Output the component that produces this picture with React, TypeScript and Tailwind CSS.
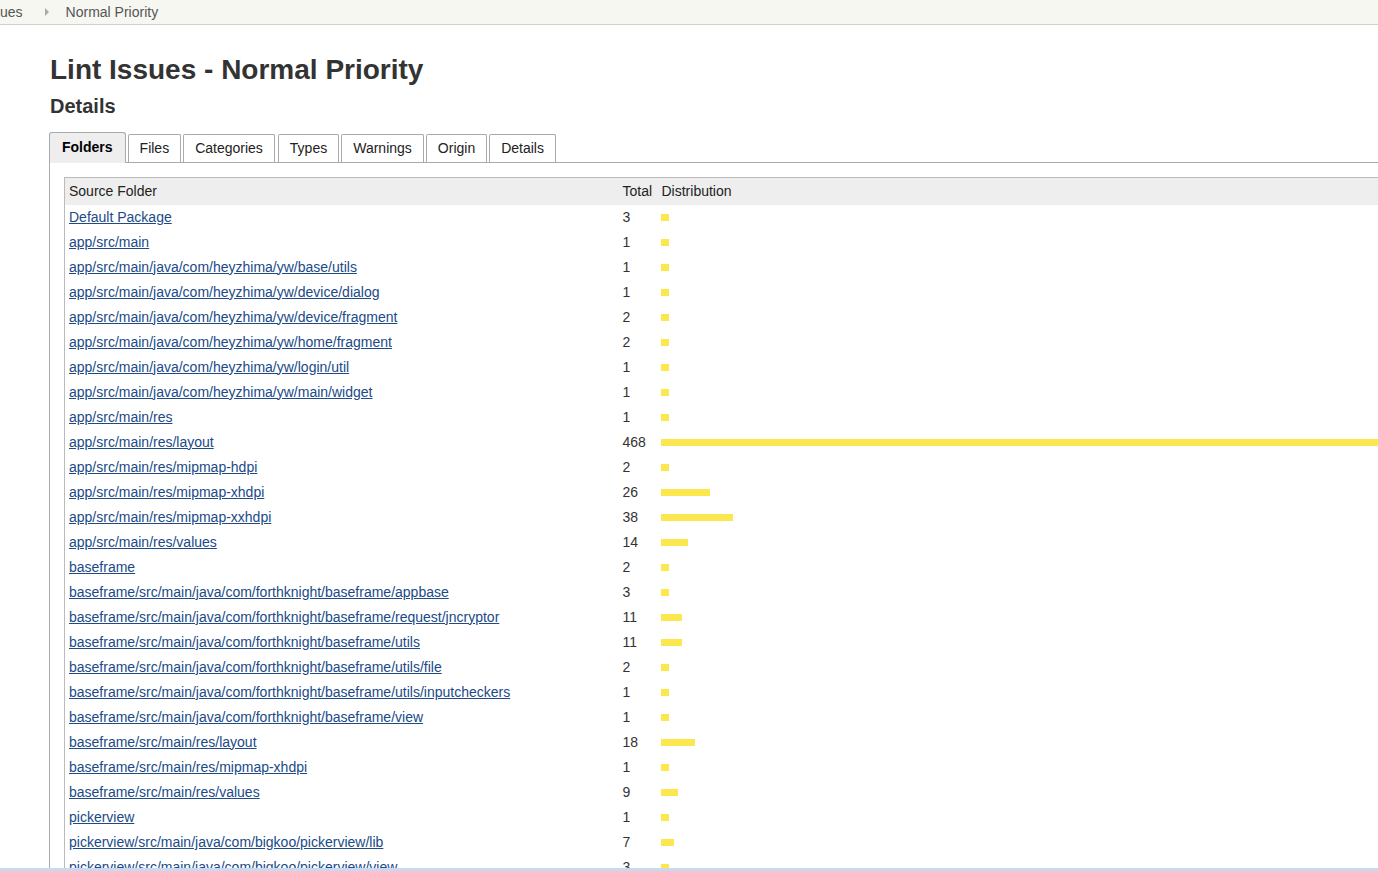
import React from 'react';

const rows: [string, number][] = [
  ['Default Package', 3],
  ['app/src/main', 1],
  ['app/src/main/java/com/heyzhima/yw/base/utils', 1],
  ['app/src/main/java/com/heyzhima/yw/device/dialog', 1],
  ['app/src/main/java/com/heyzhima/yw/device/fragment', 2],
  ['app/src/main/java/com/heyzhima/yw/home/fragment', 2],
  ['app/src/main/java/com/heyzhima/yw/login/util', 1],
  ['app/src/main/java/com/heyzhima/yw/main/widget', 1],
  ['app/src/main/res', 1],
  ['app/src/main/res/layout', 468],
  ['app/src/main/res/mipmap-hdpi', 2],
  ['app/src/main/res/mipmap-xhdpi', 26],
  ['app/src/main/res/mipmap-xxhdpi', 38],
  ['app/src/main/res/values', 14],
  ['baseframe', 2],
  ['baseframe/src/main/java/com/forthknight/baseframe/appbase', 3],
  ['baseframe/src/main/java/com/forthknight/baseframe/request/jncryptor', 11],
  ['baseframe/src/main/java/com/forthknight/baseframe/utils', 11],
  ['baseframe/src/main/java/com/forthknight/baseframe/utils/file', 2],
  ['baseframe/src/main/java/com/forthknight/baseframe/utils/inputcheckers', 1],
  ['baseframe/src/main/java/com/forthknight/baseframe/view', 1],
  ['baseframe/src/main/res/layout', 18],
  ['baseframe/src/main/res/mipmap-xhdpi', 1],
  ['baseframe/src/main/res/values', 9],
  ['pickerview', 1],
  ['pickerview/src/main/java/com/bigkoo/pickerview/lib', 7],
  ['pickerview/src/main/java/com/bigkoo/pickerview/view', 3],
];

const tabs = ['Folders', 'Files', 'Categories', 'Types', 'Warnings', 'Origin', 'Details'];

export default function App() {
  return (
    <div className="relative w-[1378px] h-[871px] overflow-hidden bg-white text-[#333] font-['Liberation_Sans',Arial,sans-serif]">
      {/* breadcrumb bar */}
      <div className="h-[25px] bg-[#f6f7f1] border-b border-[#d0d0d0] flex items-center text-[14px] text-[#555]">
        <span>ues</span>
        <span className="ml-[22px] w-0 h-0 border-y-[4px] border-y-transparent border-l-[4px] border-l-[#aaa]" />
        <span className="ml-[17px]">Normal Priority</span>
      </div>

      <div className="pl-[49px]">
        <h1 className="mt-[29px] text-[28px] leading-[32px] font-bold text-[#333] pl-px">Lint Issues - Normal Priority</h1>
        <h2 className="mt-[8px] text-[20px] leading-[24px] font-bold text-[#333] pl-px">Details</h2>

        {/* tabs */}
        <div className="mt-[14px] flex items-end h-[31px] border-b border-[#aaa] text-[14px]">
          {tabs.map((t, i) =>
            i === 0 ? (
              <div
                key={t}
                className="relative -mb-px h-[31px] px-[12px] pb-px flex items-center font-bold text-black bg-[#eee] border-x border-t border-[#aaa] rounded-t-[3px]"
              >
                {t}
              </div>
            ) : (
              <div
                key={t}
                className={`${i === 3 ? 'ml-[3px]' : 'ml-[2px]'} h-[28px] px-[11px] pb-px flex items-center text-[#222] bg-white border-x border-t border-[#aaa] rounded-t-[2px]`}
              >
                {t}
              </div>
            )
          )}
        </div>

        {/* panel */}
        <div className="border-l border-[#aaa] pl-[14px] pt-[14px] h-[800px]">
          <table className="w-[1560px] border-collapse text-[14px] table-fixed">
            <colgroup>
              <col className="w-[554px]" />
              <col className="w-[39px]" />
              <col />
            </colgroup>
            <thead>
              <tr className="h-[27px] bg-[#eee]">
                <th className="px-[4px] text-left font-normal border-t border-l border-[#bbb] text-[#222]">Source Folder</th>
                <th className="px-[4px] text-left font-normal border-t border-[#bbb] text-[#222]">Total</th>
                <th className="px-[4px] text-left font-normal border-t border-[#bbb] text-[#222]">Distribution</th>
              </tr>
            </thead>
            <tbody>
              {rows.map(([name, n]) => (
                <tr key={name} className="h-[25px]">
                  <td className="px-[4px] border-l border-[#bbb] whitespace-nowrap">
                    <a href="#" className="text-[#204a87] underline">{name}</a>
                  </td>
                  <td className="px-[4px] text-[#333]">{n}</td>
                  <td className="px-[4px]">
                    <div
                      className="-ml-px h-[7px] bg-[#fbe84e]"
                      style={{ width: Math.max(8, Math.round((n * 890) / 468)) }}
                    />
                  </td>
                </tr>
              ))}
            </tbody>
          </table>
        </div>
      </div>

      {/* bottom edge strip */}
      <div className="absolute left-0 right-0 bottom-0 h-[3px] bg-[#c8daf2]" />
    </div>
  );
}
